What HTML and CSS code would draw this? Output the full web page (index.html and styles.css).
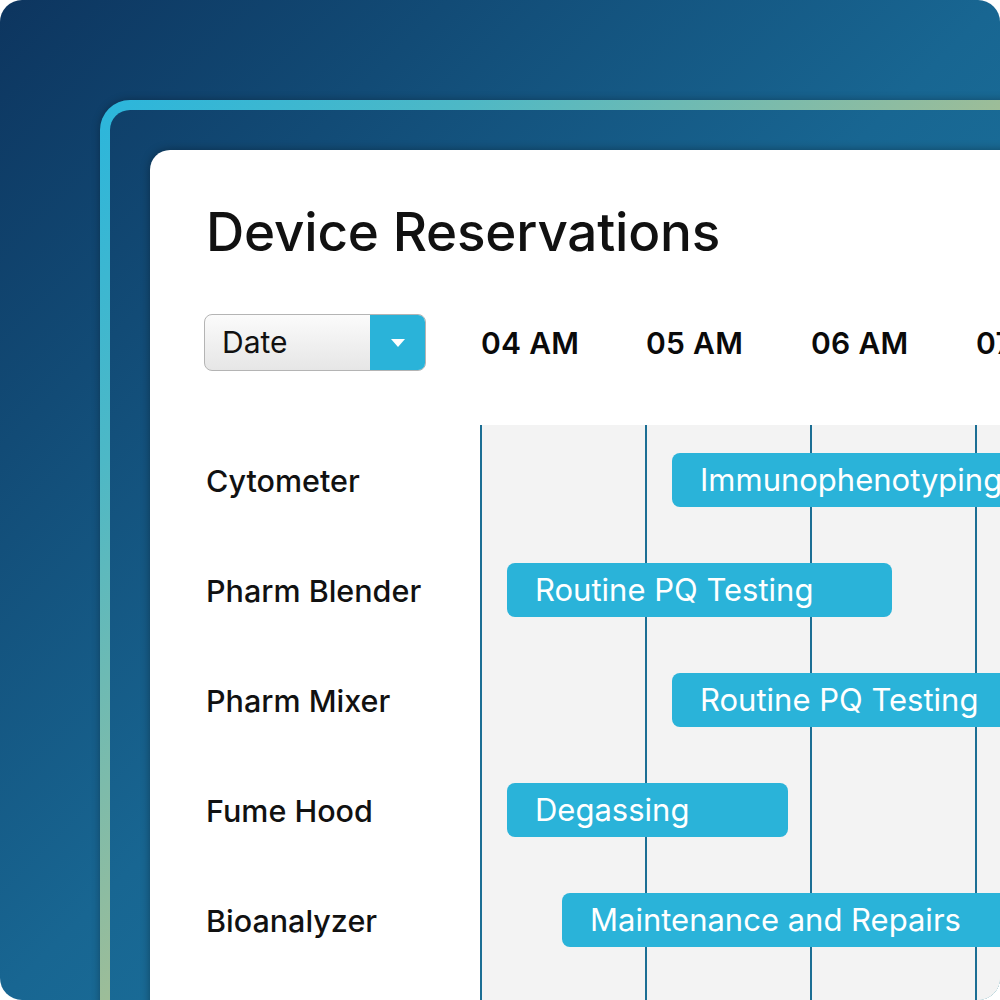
FILE: index.html
```html
<!DOCTYPE html>
<html lang="en">
<head>
  <meta charset="UTF-8">
  <meta name="viewport" content="width=device-width, initial-scale=1.0">
  <link rel="stylesheet" href="styles.css">
  <title>Device Reservations</title>
</head>
<body>
  <div class="frame">
    <div class="ring">
      <div class="ring-inner">
        <div class="card">
          <h1>Device Reservations</h1>

          <div class="toolbar">
            <div class="select">
              <span class="select-label">Date</span>
              <span class="select-arrow">
                <svg width="16" height="10" viewBox="0 0 16 10"><path d="M1 1h14L8 9z" fill="#fff"/></svg>
              </span>
            </div>
            <div class="hours">
              <span class="hour">04 AM</span>
              <span class="hour">05 AM</span>
              <span class="hour">06 AM</span>
              <span class="hour">07 AM</span>
            </div>
          </div>

          <div class="schedule">
            <div class="row">
              <div class="device">Cytometer</div>
              <div class="track">
                <div class="booking" style="margin-left: 192px; width: 420px;">Immunophenotyping</div>
              </div>
            </div>
            <div class="row">
              <div class="device">Pharm Blender</div>
              <div class="track">
                <div class="booking" style="margin-left: 27px; width: 385px;">Routine PQ Testing</div>
              </div>
            </div>
            <div class="row">
              <div class="device">Pharm Mixer</div>
              <div class="track">
                <div class="booking" style="margin-left: 192px; width: 420px;">Routine PQ Testing</div>
              </div>
            </div>
            <div class="row">
              <div class="device">Fume Hood</div>
              <div class="track">
                <div class="booking" style="margin-left: 27px; width: 281px;">Degassing</div>
              </div>
            </div>
            <div class="row">
              <div class="device">Bioanalyzer</div>
              <div class="track">
                <div class="booking" style="margin-left: 82px; width: 480px;">Maintenance and Repairs</div>
              </div>
            </div>
            <div class="row">
              <div class="device"></div>
              <div class="track"></div>
            </div>
          </div>
        </div>
      </div>
    </div>
  </div>
</body>
</html>
```

FILE: styles.css
```css
body {
  margin: 0;
  background: #fff;
  font-family: Inter, "Noto Sans", sans-serif;
  color: #111;
}
.frame {
  width: 1000px;
  height: 1000px;
  border-radius: 22px;
  overflow: hidden;
  padding: 100px 0 0 100px;
  box-sizing: border-box;
  background: linear-gradient(135deg, #0d355f 0%, #186692 50%, #1e82aa 100%) fixed;
}
.ring {
  width: 1000px;
  height: 1000px;
  padding: 10px 0 0 10px;
  border-radius: 30px 0 0 0;
  background: linear-gradient(135deg, #2bb6dc 0%, #4db8c6 18%, #9dbd98 45%);
  box-shadow: 0 0 8px rgba(0, 0, 0, 0.3);
}
.ring-inner {
  height: 100%;
  padding: 40px 0 0 40px;
  box-sizing: border-box;
  border-radius: 20px 0 0 0;
  background: linear-gradient(135deg, #0d355f 0%, #186692 50%, #1e82aa 100%) fixed;
}
.card {
  height: 100%;
  background: #fff;
  border-radius: 20px 0 0 0;
  padding: 42px 0 0 54px;
  box-sizing: border-box;
  box-shadow: 0 0 10px rgba(0, 0, 0, 0.35);
}
h1 {
  margin: 0 0 0 2px;
  font-size: 53px;
  font-weight: 450;
  line-height: 80px;
  letter-spacing: -0.2px;
}
.toolbar {
  display: flex;
  align-items: center;
  margin-top: 42px;
}
.select {
  display: flex;
  flex-shrink: 0;
  width: 222px;
  height: 57px;
  box-sizing: border-box;
  border: 1px solid #b4b4b4;
  border-radius: 8px;
  overflow: hidden;
  background: linear-gradient(#fbfbfb, #e6e6e6);
}
.select-label {
  flex: 1;
  padding-left: 17px;
  font-size: 30px;
  line-height: 55px;
  color: #111;
}
.select-arrow {
  width: 55px;
  background: #2ab3d9;
  display: flex;
  align-items: center;
  justify-content: center;
}
.hours {
  display: flex;
  margin-left: 54px;
}
.hour {
  width: 164px;
  flex-shrink: 0;
  padding-left: 1px;
  font-size: 30px;
  font-weight: 600;
  letter-spacing: 0.3px;
  color: #0a0a0a;
}
.schedule {
  margin-top: 54px;
}
.row {
  display: flex;
  height: 110px;
}
.device {
  width: 276px;
  flex-shrink: 0;
  display: flex;
  align-items: center;
  padding-left: 2px;
  box-sizing: border-box;
  font-size: 30.5px;
  font-weight: 500;
  color: #111;
}
.track {
  flex: 1;
  display: flex;
  align-items: center;
  background-color: #f3f3f3;
  background-image: repeating-linear-gradient(to right, #1b6e94 0 1.5px, transparent 1.5px 165px);
}
.booking {
  flex-shrink: 0;
  height: 54px;
  box-sizing: border-box;
  padding-left: 28px;
  border-radius: 8px;
  background: #2ab3d9;
  color: #fff;
  font-size: 31px;
  line-height: 54px;
  white-space: nowrap;
}
```
